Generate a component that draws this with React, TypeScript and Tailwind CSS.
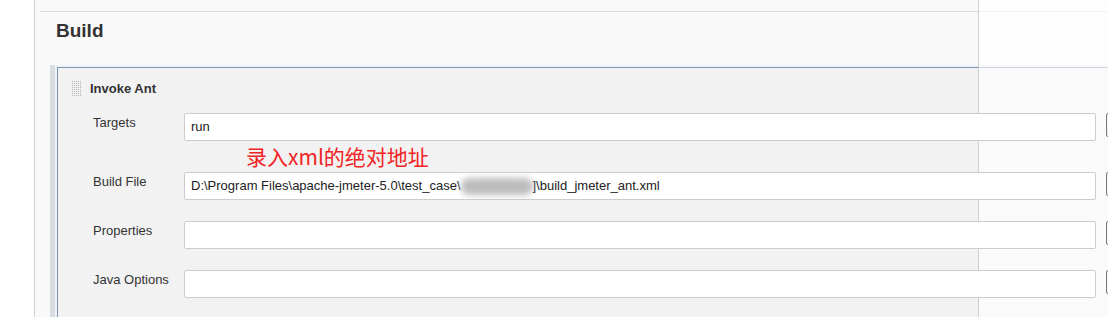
import type { ReactNode } from 'react'

function DragHandle() {
  const dots = []
  for (let r = 0; r < 8; r++) {
    for (let c = 0; c < 5; c++) {
      dots.push(<rect key={`${r}-${c}`} x={c * 2} y={r * 2} width={1} height={1} fill="#b4b4b4" />)
    }
  }
  return (
    <svg width="10" height="16" viewBox="0 0 10 16" className="shrink-0">
      {dots}
    </svg>
  )
}

function Row({ label, children, className = '' }: { label: string; children?: ReactNode; className?: string }) {
  return (
    <div className={`flex items-start ${className}`}>
      <div className="w-[91px] shrink-0 pt-[2px] text-[13px] leading-[16px] text-[#333]">{label}</div>
      <div className="relative z-20 w-[912px] h-[28px] shrink-0 flex items-center border border-[#cccccc] rounded-[2px] bg-white px-[6px] text-[13px] text-[#222] whitespace-nowrap overflow-hidden">
        {children}
      </div>
      <div className="relative z-20 ml-[10px] w-[20px] h-[24px] shrink-0 border border-[#7a7a7a] rounded-[2px] bg-[#f3f3f3]" />
    </div>
  )
}

export default function App() {
  return (
    <div className="relative w-[1108px] h-[317px] overflow-hidden bg-white flex font-['Liberation_Sans',Arial,sans-serif]">
      <div className="w-[35px] shrink-0 border-r border-[#d2d2d2] bg-white" />

      <div className="flex-1 min-w-0 bg-[#f9f9f9] pt-[11px] pl-[5px]">
        <div className="border-t border-[#dadada]">
          <h2 className="pl-[16px] pt-[7px] h-[29px] text-[19px] leading-[24px] font-bold text-[#333]">Build</h2>

          <div className="mt-[24px] ml-[10px] border-l-[5px] border-[#d9dde2] bg-[#eef3f8] pt-[2px] pl-[2px]">
            <div className="border-l border-t border-[#7e93ad] bg-[#f2f2f2] pb-[40px]">
              <div className="flex items-center pl-[14px] pt-[13px] h-[29px]">
                <DragHandle />
                <span className="ml-[8px] text-[13px] leading-[16px] font-bold text-[#333]">Invoke Ant</span>
              </div>

              <div className="pl-[35px] mt-[16px]">
                <Row label="Targets">run</Row>

                <div className="h-[31px] pt-[5px] pl-[153px] text-[21px] leading-[21px] text-[#f02424] font-['Noto_Sans_CJK_SC',sans-serif] whitespace-nowrap">
                  录入xml的绝对地址
                </div>

                <Row label="Build File">
                  <span>D:\Program Files\apache-jmeter-5.0\test_case\</span>
                  <span className="inline-block w-[72px] h-[17px] rounded-[8px] bg-[#bdbdbd] blur-[3px]" />
                  <span>]\build_jmeter_ant.xml</span>
                </Row>

                <Row label="Properties" className="mt-[21px]" />
                <Row label="Java Options" className="mt-[21px]" />
              </div>
            </div>
          </div>
        </div>
      </div>

      <div className="pointer-events-none absolute top-0 bottom-0 left-[978px] right-0 z-10 border-l border-[#cfcfcf] bg-white/60" />
    </div>
  )
}
